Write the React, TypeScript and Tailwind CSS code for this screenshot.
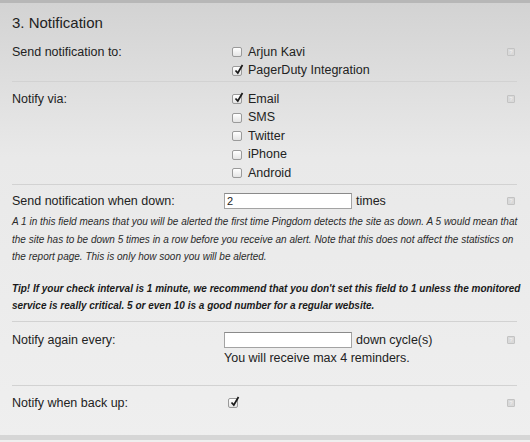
import { ReactNode } from "react";

function Check({ checked }: { checked?: boolean }) {
  return (
    <span className="relative inline-block w-[10px] h-[10px] shrink-0 rounded-[2px] border border-[#9a9a9a] bg-gradient-to-b from-white to-[#e4e4e4]">
      {checked && (
        <svg
          className="absolute -top-[3px] left-[1px]"
          width="10"
          height="11"
          viewBox="0 0 10 11"
        >
          <path
            d="M1.5 6.5 L3.8 9 L8.5 1"
            fill="none"
            stroke="#1a1a1a"
            strokeWidth="1.7"
          />
        </svg>
      )}
    </span>
  );
}

function Help() {
  return (
    <span className="mt-[5px] flex h-[8px] w-[8px] items-center justify-center rounded-[1px] border border-[#c3c3c3] bg-[#d9d9d9] text-[6px] leading-none text-[#f4f4f4]">
      ?
    </span>
  );
}

function Option({ label, checked }: { label: string; checked?: boolean }) {
  return (
    <div className="flex h-[18.5px] items-center gap-[6px] pl-[8px]">
      <Check checked={checked} />
      <span>{label}</span>
    </div>
  );
}

function Row({
  label,
  children,
  className,
}: {
  label: string;
  children: ReactNode;
  className?: string;
}) {
  return (
    <div className={"flex border-b border-[#d2d2d2] " + (className ?? "")}>
      <div className="w-[212px] shrink-0 leading-[18px]">{label}</div>
      <div className="flex-1">{children}</div>
      <div className="w-[10px] shrink-0">
        <Help />
      </div>
    </div>
  );
}

export default function App() {
  return (
    <div className="h-[442px] w-[530px] overflow-hidden border-t-[3px] border-[#b7b7b7] bg-gradient-to-b from-[#d3d3d3] via-[#e9e9e9] via-[35%] to-[#efefef] font-['Liberation_Sans',Arial,sans-serif] text-[12.5px] text-[#222]">
      <div className="flex h-[437px] flex-col border-b-[5px] border-[#d6d6d6]">
        <h2 className="h-[40px] px-3 pt-[11px] text-[15px] leading-[18px]">
          3. Notification
        </h2>
        <div className="mx-3 mr-[13px]">
          <Row label="Send notification to:" className="pb-[1px]">
            <Option label="Arjun Kavi" />
            <Option label="PagerDuty Integration" checked />
          </Row>
          <Row label="Notify via:" className="pt-[8px] pb-[1px]">
            <Option label="Email" checked />
            <Option label="SMS" />
            <Option label="Twitter" />
            <Option label="iPhone" />
            <Option label="Android" />
          </Row>
          <div className="border-b border-[#d2d2d2] pt-[7px] pb-[7px]">
            <div className="flex">
              <div className="w-[212px] shrink-0 leading-[18px]">
                Send notification when down:
              </div>
              <div className="flex flex-1 items-center gap-[4px]">
                <input
                  readOnly
                  value="2"
                  className="h-[16px] w-[128px] border border-[#a3a3a3] border-t-[#8a8a8a] bg-white px-[2px] text-[11px] text-[#222] outline-none"
                />
                <span>times</span>
              </div>
              <div className="w-[10px] shrink-0">
                <Help />
              </div>
            </div>
            <p className="mt-[3px] whitespace-nowrap text-[10px] italic leading-[17.5px] text-[#2a2a2a]">
              A 1 in this field means that you will be alerted the first time
              Pingdom detects the site as down. A 5 would mean that
              <br />
              the site has to be down 5 times in a row before you receive an
              alert. Note that this does not affect the statistics on
              <br />
              the report page. This is only how soon you will be alerted.
            </p>
            <p className="mt-[14px] whitespace-nowrap text-[10px] font-bold italic leading-[17px] text-[#1a1a1a]">
              Tip! If your check interval is 1 minute, we recommend that you
              don't set this field to 1 unless the monitored
              <br />
              service is really critical. 5 or even 10 is a good number for a
              regular website.
            </p>
          </div>
          <Row label="Notify again every:" className="pt-[9px] pb-[18px]">
            <div className="flex items-center gap-[4px]">
              <input
                readOnly
                value=""
                className="h-[16px] w-[128px] border border-[#a3a3a3] border-t-[#8a8a8a] bg-white px-[2px] text-[11px] outline-none"
              />
              <span className="leading-[18px]">down cycle(s)</span>
            </div>
            <div className="leading-[18px]">You will receive max 4 reminders.</div>
          </Row>
          <div className="flex pt-[8px]">
            <div className="w-[212px] shrink-0 leading-[18px]">
              Notify when back up:
            </div>
            <div className="flex h-[18px] flex-1 items-center pl-[4px]">
              <Check checked />
            </div>
            <div className="w-[10px] shrink-0">
              <Help />
            </div>
          </div>
        </div>
      </div>
    </div>
  );
}
